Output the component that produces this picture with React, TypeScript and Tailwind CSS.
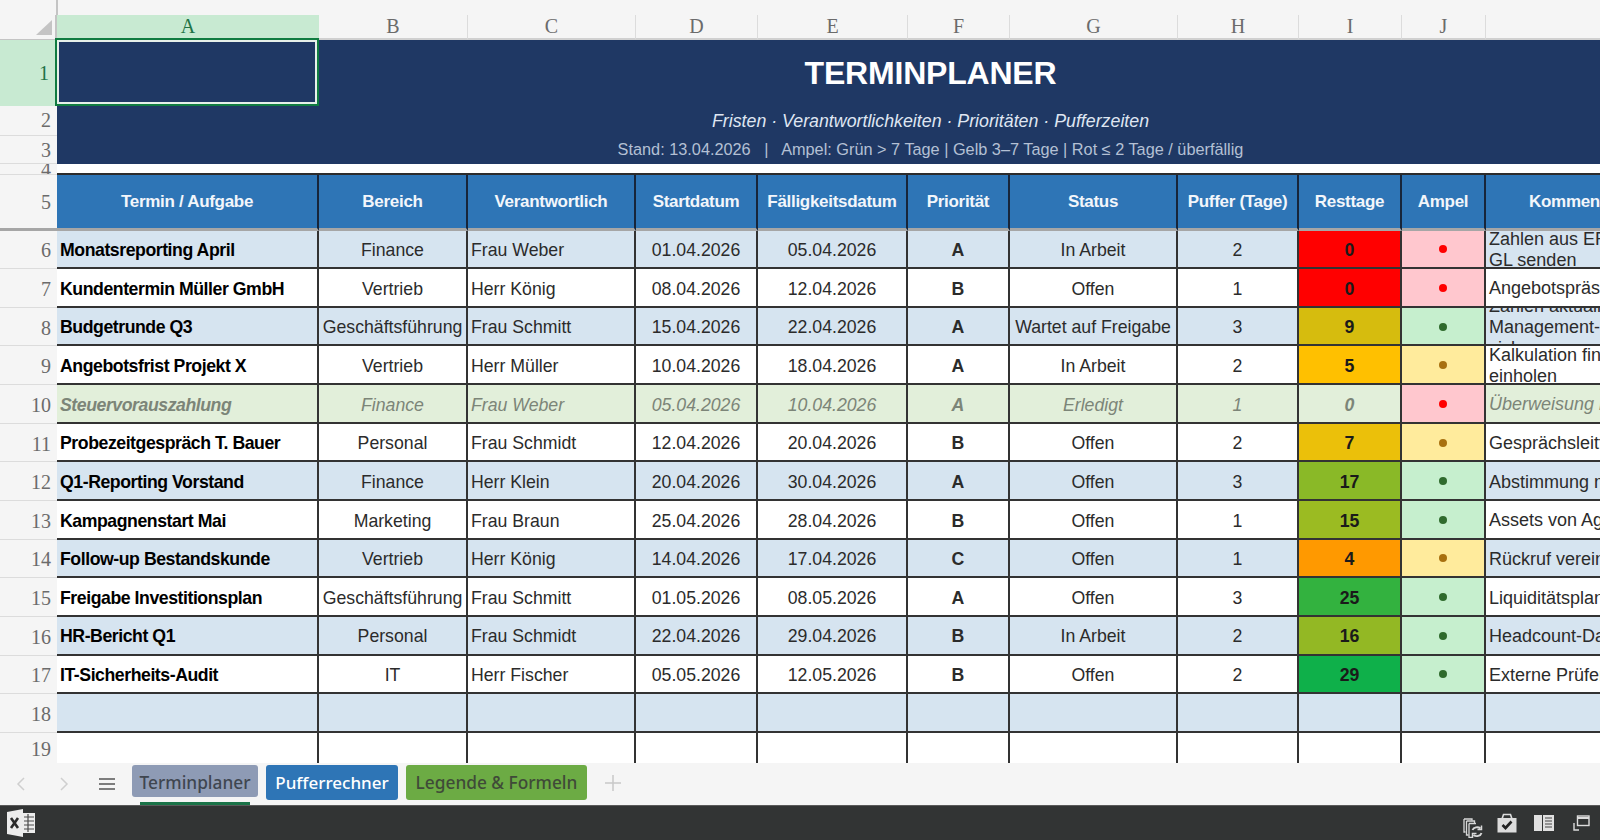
import React from "react";

const colHeads = ["A", "B", "C", "D", "E", "F", "G", "H", "I", "J"];
const tableHeads = ["Termin / Aufgabe", "Bereich", "Verantwortlich", "Startdatum", "Fälligkeitsdatum", "Priorität", "Status", "Puffer (Tage)", "Resttage", "Ampel", "Kommentar"];

interface Row {
  values: string[];
  rest: string;
  restClass: string;
  light: "red" | "yellow" | "green";
  comment: string[];
  done?: boolean;
}

const rows: Row[] = [
  { values: ["Monatsreporting April", "Finance", "Frau Weber", "01.04.2026", "05.04.2026", "A", "In Arbeit", "2"], rest: "0", restClass: "bg-[#ff0000]", light: "red", comment: ["Zahlen aus ERP prüfen,", "GL senden"] },
  { values: ["Kundentermin Müller GmbH", "Vertrieb", "Herr König", "08.04.2026", "12.04.2026", "B", "Offen", "1"], rest: "0", restClass: "bg-[#ff0000]", light: "red", comment: ["Angebotspräsentation"] },
  { values: ["Budgetrunde Q3", "Geschäftsführung", "Frau Schmitt", "15.04.2026", "22.04.2026", "A", "Wartet auf Freigabe", "3"], rest: "9", restClass: "bg-[#d6bc0e]", light: "green", comment: ["Zahlen aktualisieren,", "Management-Input", "sichern"] },
  { values: ["Angebotsfrist Projekt X", "Vertrieb", "Herr Müller", "10.04.2026", "18.04.2026", "A", "In Arbeit", "2"], rest: "5", restClass: "bg-[#ffc000]", light: "yellow", comment: ["Kalkulation final", "einholen"] },
  { values: ["Steuervorauszahlung", "Finance", "Frau Weber", "05.04.2026", "10.04.2026", "A", "Erledigt", "1"], rest: "0", restClass: "", light: "red", comment: ["Überweisung initiieren"], done: true },
  { values: ["Probezeitgespräch T. Bauer", "Personal", "Frau Schmidt", "12.04.2026", "20.04.2026", "B", "Offen", "2"], rest: "7", restClass: "bg-[#ebc00a]", light: "yellow", comment: ["Gesprächsleitfaden"] },
  { values: ["Q1-Reporting Vorstand", "Finance", "Herr Klein", "20.04.2026", "30.04.2026", "A", "Offen", "3"], rest: "17", restClass: "bg-[#8ab927]", light: "green", comment: ["Abstimmung mit CFO"] },
  { values: ["Kampagnenstart Mai", "Marketing", "Frau Braun", "25.04.2026", "28.04.2026", "B", "Offen", "1"], rest: "15", restClass: "bg-[#9bbb22]", light: "green", comment: ["Assets von Agentur"] },
  { values: ["Follow-up Bestandskunde", "Vertrieb", "Herr König", "14.04.2026", "17.04.2026", "C", "Offen", "1"], rest: "4", restClass: "bg-[#ff9900]", light: "yellow", comment: ["Rückruf vereinbaren"] },
  { values: ["Freigabe Investitionsplan", "Geschäftsführung", "Frau Schmitt", "01.05.2026", "08.05.2026", "A", "Offen", "3"], rest: "25", restClass: "bg-[#33b23f]", light: "green", comment: ["Liquiditätsplanung"] },
  { values: ["HR-Bericht Q1", "Personal", "Frau Schmidt", "22.04.2026", "29.04.2026", "B", "In Arbeit", "2"], rest: "16", restClass: "bg-[#93b824]", light: "green", comment: ["Headcount-Daten"] },
  { values: ["IT-Sicherheits-Audit", "IT", "Herr Fischer", "05.05.2026", "12.05.2026", "B", "Offen", "2"], rest: "29", restClass: "bg-[#0fb04a]", light: "green", comment: ["Externe Prüfer melden"] },
];

const lightCell = { red: "bg-[#ffc7ce]", yellow: "bg-[#ffeb9c]", green: "bg-[#c6efce]" };
const lightDot = { red: "bg-[#ff0000]", yellow: "bg-[#a8700f]", green: "bg-[#2f6b2d]" };

const rowHead = "flex items-center justify-end pr-[6px] bg-[#f5f5f5] border-b border-[#dcdcdc] text-[#6b6b6b] text-[20px] font-['Liberation_Serif',serif]";
const line = "border-r-2 border-b-2 border-[#333333]";
const doneText = "text-[#7c8578] italic";

const ExcelLogo = () => (
  <svg width="30" height="30" viewBox="0 0 30 30">
    <path d="M1 4 L17 1 V29 L1 26 Z" fill="#ececec" />
    <path d="M5 10 L12 20 M12 10 L5 20" stroke="#2b2b2b" strokeWidth="2.6" />
    <rect x="17" y="5" width="12" height="20" fill="#ececec" />
    <path d="M18 9 H28 M18 13 H28 M18 17 H28 M18 21 H28 M22 6 V24" stroke="#4a4a4a" strokeWidth="1.2" />
  </svg>
);

const SyncIcon = () => (
  <svg className="mt-[9px]" width="20" height="20" viewBox="0 0 20 20" fill="none" stroke="#d8d8d8" strokeWidth="1.3">
    <path d="M1 1 H9 V2.5 M1 1 V14 H2.5" />
    <path d="M3.5 3 H11.5 V5 M3.5 3 V17 H5.5" />
    <path d="M6 5.5 H13 M6 5.5 V19.5 H9" />
    <path d="M9.5 12 a4.8 4 0 0 1 8 -1.5 M18.5 15 a4.8 4 0 0 1 -8 2" strokeWidth="1.9" />
    <path d="M18.5 7.5 V11.5 H14.5 M9.5 20 V15.5 H13.5" strokeWidth="1.5" />
  </svg>
);

const CaseIcon = () => (
  <svg width="20" height="20" viewBox="0 0 20 20">
    <path d="M5 6 L6.5 1.5 H13.5 L15 6" fill="none" stroke="#dcdcdc" strokeWidth="1.6" />
    <path d="M0.5 5 H19.5 V19.5 H0.5 Z" fill="#dcdcdc" />
    <path d="M5.5 12 L8.5 15 L14.5 8.5" fill="none" stroke="#222" strokeWidth="2.6" />
  </svg>
);

const BookIcon = () => (
  <svg width="20" height="16" viewBox="0 0 20 16">
    <rect x="0" y="0" width="8" height="16" fill="#e0e0e0" />
    <rect x="9" y="0" width="11" height="16" fill="#e0e0e0" />
    <path d="M11 3 H18 M11 6 H18 M11 9 H18 M11 12 H18" stroke="#444" strokeWidth="1.2" />
  </svg>
);

const WindowsIcon = () => (
  <svg width="17" height="16" viewBox="0 0 17 16" fill="none" stroke="#dcdcdc" strokeWidth="1.4">
    <rect x="4.5" y="1" width="11.5" height="9.5" />
    <path d="M4.5 3 H16" strokeWidth="2" />
    <path d="M1 8 V15 H6" />
  </svg>
);

export default function App() {
  return (
    <div className="w-[1600px] h-[840px] overflow-hidden flex flex-col bg-[#f5f5f5] font-['Liberation_Sans',Arial,sans-serif]">
      <div className="h-[15px] shrink-0 ml-[56px] border-l-2 border-[#c4c4c4]" />

      <div className="h-[748px] shrink-0 overflow-hidden grid grid-cols-[57px_262px_149px_168px_122px_150px_102px_168px_121px_103px_84px_114px] grid-rows-[24.5px_66px_30px_28px_11px_56px_repeat(13,38.65px)_31px]">
        {/* column letters */}
        <div className="relative bg-[#f5f5f5] border-r-2 border-b border-[#c4c4c4]">
          <div className="absolute right-[3px] bottom-[4px] w-0 h-0 border-l-[16px] border-l-transparent border-b-[15px] border-b-[#c4c4c4]" />
        </div>
        {colHeads.map((c, i) => (
          <div
            key={c}
            className={`flex items-center justify-center text-[20px] font-['Liberation_Serif',serif] border-b-2 border-[#d0d0d0] ${i === 0 ? "bg-[#c8ead2] text-[#217346]" : "bg-[#f5f5f5] text-[#6b6b6b] border-r border-r-[#dcdcdc]"}`}
          >
            {c}
          </div>
        ))}
        <div className="bg-[#f5f5f5] border-b-2 border-[#d0d0d0]" />

        {/* title rows */}
        <div className="flex items-center justify-end pr-[6px] bg-[#c8ead2] text-[#217346] text-[20px] font-['Liberation_Serif',serif] border-r-2 border-[#1a7f4b]">1</div>
        <div className="relative col-span-11 row-span-3 bg-[#1f3864] pl-[204px] text-center flex flex-col">
          <div className="h-[66px] flex items-center justify-center text-white text-[32px] font-bold tracking-[-0.2px]">TERMINPLANER</div>
          <div className="h-[30px] pt-[1px] flex items-center justify-center text-[#dfe6f2] text-[17.8px] italic">
            Fristen · Verantwortlichkeiten · Prioritäten · Pufferzeiten
          </div>
          <div className="h-[28px] flex items-center justify-center text-[#b4c0d4] text-[16.3px] whitespace-pre">
            Stand: 13.04.2026   |   Ampel: Grün &gt; 7 Tage | Gelb 3–7 Tage | Rot ≤ 2 Tage / überfällig
          </div>
          <div className="absolute left-[-2px] top-[-2px] w-[264px] h-[68px] border-2 border-[#107c41] outline outline-2 -outline-offset-4 outline-[#e6f0ea]" />
        </div>
        <div className={rowHead}>2</div>
        <div className={`${rowHead} pt-[2px]`}>3</div>

        {/* spacer row */}
        <div className={`${rowHead} text-[13px] leading-none overflow-hidden`}>4</div>
        <div className="col-span-11 bg-white border-b-2 border-[#2b2b2b]" />

        {/* table head */}
        <div className={`${rowHead} pt-[2px] border-b-[3px] border-b-[#a6a6a6]`}>5</div>
        {tableHeads.map((h, j) => (
          <div
            key={h}
            className={`bg-[#2e75b6] pt-[2px] text-[#f2f6fb] text-[17px] font-bold tracking-[-0.3px] flex items-center whitespace-nowrap overflow-hidden border-b-[3px] border-b-[#a6a6a6] ${j < 10 ? "justify-center border-r-2 border-r-[#17253a]" : "justify-start pl-[43px]"}`}
          >
            {h}
          </div>
        ))}

        {/* data */}
        {rows.map((r, i) => {
          const band = r.done ? "bg-[#e2efda]" : i % 2 === 0 ? "bg-[#d6e4f0]" : "bg-white";
          const text = r.done ? doneText : "text-[#2b2b2b]";
          return (
            <React.Fragment key={r.values[0]}>
              <div className={`${rowHead} pt-[2px]`}>{i + 6}</div>
              {r.values.map((v, j) => (
                <div
                  key={j}
                  className={`${band} ${line} ${text} pt-[3px] text-[17.7px] flex items-center whitespace-nowrap overflow-hidden ${j === 0 || j === 2 ? "justify-start pl-[3px]" : "justify-center"} ${j === 0 ? `text-[17.3px] font-bold tracking-[-0.45px] ${r.done ? "" : "text-black"}` : ""} ${j === 5 ? "font-bold" : ""}`}
                >
                  {v}
                </div>
              ))}
              <div className={`${r.restClass || band} ${line} ${r.done ? `${doneText} font-semibold` : "text-[#1a1a1a] font-bold"} pt-[3px] text-[17.7px] flex items-center justify-center`}>
                {r.rest}
              </div>
              <div className={`${lightCell[r.light]} ${line} flex items-center justify-center pt-[1px]`}>
                <span className={`w-[8px] h-[8px] rounded-full ${lightDot[r.light]}`} />
              </div>
              <div className={`${band} border-b-2 border-[#333333] ${r.done ? doneText : "text-[#2b2b2b]"} pt-[3px] text-[18px] leading-[21px] pl-[3px] flex flex-col justify-center overflow-hidden whitespace-nowrap`}>
                {r.comment.map((c) => (
                  <div key={c} className="shrink-0">{c}</div>
                ))}
              </div>
            </React.Fragment>
          );
        })}

        {/* empty rows */}
        <div className={`${rowHead} pt-[2px]`}>18</div>
        {tableHeads.map((h, j) => (
          <div key={h} className={`bg-[#d6e4f0] border-b-2 border-[#333333] ${j < 10 ? "border-r-2" : ""}`} />
        ))}
        <div className={`${rowHead} pt-[2px]`}>19</div>
        {tableHeads.map((h, j) => (
          <div key={h} className={`bg-white border-[#333333] ${j < 10 ? "border-r-2" : ""}`} />
        ))}
      </div>

      {/* sheet tabs */}
      <div className="h-[42px] shrink-0 bg-[#f5f5f5] flex items-start font-['Noto_Sans',sans-serif]">
        <svg className="ml-[15px] mt-[13px]" width="12" height="16" viewBox="0 0 12 16" fill="none" stroke="#cfcfcf" strokeWidth="1.5">
          <path d="M9 2 L3 8 L9 14" />
        </svg>
        <svg className="ml-[31px] mt-[13px]" width="12" height="16" viewBox="0 0 12 16" fill="none" stroke="#cfcfcf" strokeWidth="1.5">
          <path d="M3 2 L9 8 L3 14" />
        </svg>
        <svg className="ml-[29px] mt-[14px]" width="16" height="14" viewBox="0 0 16 14" fill="none" stroke="#555" strokeWidth="1.6">
          <path d="M0 2 H16 M0 7 H16 M0 12 H16" />
        </svg>
        <div className="relative ml-[17px] mt-[2px] w-[126px] h-[32px] pt-[3px] rounded-[3px] bg-[#8e9bb5] text-[#3f4650] text-[17.3px] font-medium flex items-center justify-center">
          Terminplaner
          <div className="absolute left-[8px] right-[8px] top-[37px] h-[3px] bg-[#1a7348]" />
        </div>
        <div className="ml-[8px] mt-[2px] w-[132px] h-[35px] rounded-[3px] bg-[#2e75b6] text-white text-[17px] font-medium flex items-center justify-center">
          Pufferrechner
        </div>
        <div className="ml-[8px] mt-[2px] w-[181px] h-[35px] rounded-[3px] bg-[#6cab44] text-[#3f4a38] text-[17.3px] font-medium flex items-center justify-center">
          Legende &amp; Formeln
        </div>
        <svg className="ml-[18px] mt-[12px]" width="16" height="16" viewBox="0 0 16 16" fill="none" stroke="#c8c8c8" strokeWidth="1.5">
          <path d="M8 0 V16 M0 8 H16" />
        </svg>
      </div>

      {/* status bar */}
      <div className="h-[35px] shrink-0 bg-[#323434] border-t border-[#5a5a5a] flex items-center pl-[6px] pr-[10px]">
        <ExcelLogo />
        <div className="ml-auto flex items-center">
          <SyncIcon />
          <div className="ml-[14px]"><CaseIcon /></div>
          <div className="ml-[17px]"><BookIcon /></div>
          <div className="ml-[19px]"><WindowsIcon /></div>
        </div>
      </div>
    </div>
  );
}
